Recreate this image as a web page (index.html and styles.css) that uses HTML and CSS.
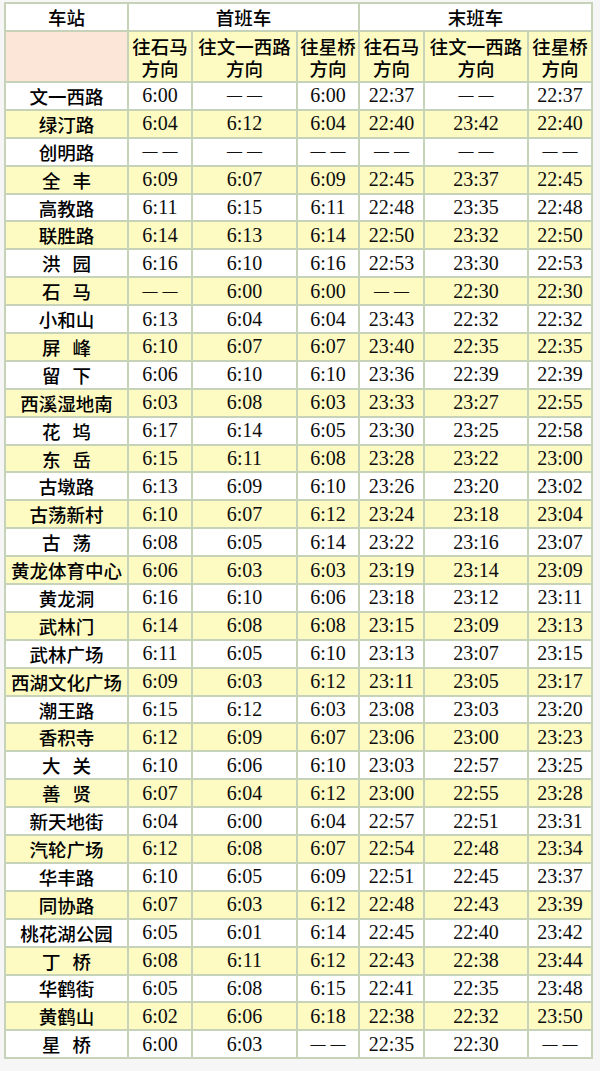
FILE: index.html
```html
<!DOCTYPE html>
<html lang="zh">
<head>
<meta charset="utf-8">
<title>时刻表</title>
<link rel="stylesheet" href="styles.css">
</head>
<body>
<table class="tt">
<colgroup>
<col class="c1"><col class="c2"><col class="c3"><col class="c4"><col class="c5"><col class="c6"><col class="c7">
</colgroup>
<thead>
<tr class="h1"><th>车站</th><th colspan="3">首班车</th><th colspan="3">末班车</th></tr>
<tr class="h2"><th class="peach"></th><th>往石马<br>方向</th><th>往文一西路<br>方向</th><th>往星桥<br>方向</th><th>往石马<br>方向</th><th>往文一西路<br>方向</th><th>往星桥<br>方向</th></tr>
</thead>
<tbody>
<tr><th>文一西路</th><td>6:00</td><td class="d">——</td><td>6:00</td><td>22:37</td><td class="d">——</td><td>22:37</td></tr>
<tr class="y"><th>绿汀路</th><td>6:04</td><td>6:12</td><td>6:04</td><td>22:40</td><td>23:42</td><td>22:40</td></tr>
<tr><th>创明路</th><td class="d">——</td><td class="d">——</td><td class="d">——</td><td class="d">——</td><td class="d">——</td><td class="d">——</td></tr>
<tr class="y"><th class="sp">全 丰</th><td>6:09</td><td>6:07</td><td>6:09</td><td>22:45</td><td>23:37</td><td>22:45</td></tr>
<tr><th>高教路</th><td>6:11</td><td>6:15</td><td>6:11</td><td>22:48</td><td>23:35</td><td>22:48</td></tr>
<tr class="y"><th>联胜路</th><td>6:14</td><td>6:13</td><td>6:14</td><td>22:50</td><td>23:32</td><td>22:50</td></tr>
<tr><th class="sp">洪 园</th><td>6:16</td><td>6:10</td><td>6:16</td><td>22:53</td><td>23:30</td><td>22:53</td></tr>
<tr class="y"><th class="sp">石 马</th><td class="d">——</td><td>6:00</td><td>6:00</td><td class="d">——</td><td>22:30</td><td>22:30</td></tr>
<tr><th>小和山</th><td>6:13</td><td>6:04</td><td>6:04</td><td>23:43</td><td>22:32</td><td>22:32</td></tr>
<tr class="y"><th class="sp">屏 峰</th><td>6:10</td><td>6:07</td><td>6:07</td><td>23:40</td><td>22:35</td><td>22:35</td></tr>
<tr><th class="sp">留 下</th><td>6:06</td><td>6:10</td><td>6:10</td><td>23:36</td><td>22:39</td><td>22:39</td></tr>
<tr class="y"><th>西溪湿地南</th><td>6:03</td><td>6:08</td><td>6:03</td><td>23:33</td><td>23:27</td><td>22:55</td></tr>
<tr><th class="sp">花 坞</th><td>6:17</td><td>6:14</td><td>6:05</td><td>23:30</td><td>23:25</td><td>22:58</td></tr>
<tr class="y"><th class="sp">东 岳</th><td>6:15</td><td>6:11</td><td>6:08</td><td>23:28</td><td>23:22</td><td>23:00</td></tr>
<tr><th>古墩路</th><td>6:13</td><td>6:09</td><td>6:10</td><td>23:26</td><td>23:20</td><td>23:02</td></tr>
<tr class="y"><th>古荡新村</th><td>6:10</td><td>6:07</td><td>6:12</td><td>23:24</td><td>23:18</td><td>23:04</td></tr>
<tr><th class="sp">古 荡</th><td>6:08</td><td>6:05</td><td>6:14</td><td>23:22</td><td>23:16</td><td>23:07</td></tr>
<tr class="y"><th>黄龙体育中心</th><td>6:06</td><td>6:03</td><td>6:03</td><td>23:19</td><td>23:14</td><td>23:09</td></tr>
<tr><th>黄龙洞</th><td>6:16</td><td>6:10</td><td>6:06</td><td>23:18</td><td>23:12</td><td>23:11</td></tr>
<tr class="y"><th>武林门</th><td>6:14</td><td>6:08</td><td>6:08</td><td>23:15</td><td>23:09</td><td>23:13</td></tr>
<tr><th>武林广场</th><td>6:11</td><td>6:05</td><td>6:10</td><td>23:13</td><td>23:07</td><td>23:15</td></tr>
<tr class="y"><th>西湖文化广场</th><td>6:09</td><td>6:03</td><td>6:12</td><td>23:11</td><td>23:05</td><td>23:17</td></tr>
<tr><th>潮王路</th><td>6:15</td><td>6:12</td><td>6:03</td><td>23:08</td><td>23:03</td><td>23:20</td></tr>
<tr class="y"><th>香积寺</th><td>6:12</td><td>6:09</td><td>6:07</td><td>23:06</td><td>23:00</td><td>23:23</td></tr>
<tr><th class="sp">大 关</th><td>6:10</td><td>6:06</td><td>6:10</td><td>23:03</td><td>22:57</td><td>23:25</td></tr>
<tr class="y"><th class="sp">善 贤</th><td>6:07</td><td>6:04</td><td>6:12</td><td>23:00</td><td>22:55</td><td>23:28</td></tr>
<tr><th>新天地街</th><td>6:04</td><td>6:00</td><td>6:04</td><td>22:57</td><td>22:51</td><td>23:31</td></tr>
<tr class="y"><th>汽轮广场</th><td>6:12</td><td>6:08</td><td>6:07</td><td>22:54</td><td>22:48</td><td>23:34</td></tr>
<tr><th>华丰路</th><td>6:10</td><td>6:05</td><td>6:09</td><td>22:51</td><td>22:45</td><td>23:37</td></tr>
<tr class="y"><th>同协路</th><td>6:07</td><td>6:03</td><td>6:12</td><td>22:48</td><td>22:43</td><td>23:39</td></tr>
<tr><th>桃花湖公园</th><td>6:05</td><td>6:01</td><td>6:14</td><td>22:45</td><td>22:40</td><td>23:42</td></tr>
<tr class="y"><th class="sp">丁 桥</th><td>6:08</td><td>6:11</td><td>6:12</td><td>22:43</td><td>22:38</td><td>23:44</td></tr>
<tr><th>华鹤街</th><td>6:05</td><td>6:08</td><td>6:15</td><td>22:41</td><td>22:35</td><td>23:48</td></tr>
<tr class="y"><th>黄鹤山</th><td>6:02</td><td>6:06</td><td>6:18</td><td>22:38</td><td>22:32</td><td>23:50</td></tr>
<tr><th class="sp">星 桥</th><td>6:00</td><td>6:03</td><td class="d">——</td><td>22:35</td><td>22:30</td><td class="d">——</td></tr>
</tbody>
</table>
</body>
</html>
```

FILE: styles.css
```css
html, body {
  margin: 0;
  padding: 0;
  background: #f6f6f6;
}
body {
  padding: 2px 0 0 4px;
}
.tt {
  border-collapse: collapse;
  table-layout: fixed;
  width: 587px;
  background: #ffffff;
  color: #0c0c0c;
  font-family: "Liberation Serif", "Noto Sans CJK SC", serif;
}
.c1 { width: 123px; }
.c2 { width: 64px; }
.c3 { width: 105px; }
.c4 { width: 62px; }
.c5 { width: 65px; }
.c6 { width: 104px; }
.c7 { width: 64px; }
.tt th, .tt td {
  border: 2px solid #c6d3b8;
  padding: 0;
  text-align: center;
  vertical-align: middle;
  white-space: nowrap;
  overflow: hidden;
}
.tt th {
  font-family: "Noto Sans CJK SC", sans-serif;
  font-weight: 500;
  font-size: 18.5px;
  line-height: 22px;
  color: #000000;
}
.tt td {
  font-size: 20px;
  font-weight: 400;
}
.tt td.d {
  font-family: "Liberation Serif", serif;
  font-size: 15px;
  font-weight: 700;
  letter-spacing: 5px;
  text-indent: 5px;
  color: #111111;
}
.h1 { height: 28px; }
.h1 th { background: #ffffff; }
.h2 { height: 51px; }
.h2 th { background: #fdfbc2; font-size: 18.5px; line-height: 22px; }
.h2 th.peach { background: #fbe6d8; }
tbody tr { height: 27.9px; }
tbody tr.y { background: #fdfbc2; }
.sp { word-spacing: 8px; }
```
